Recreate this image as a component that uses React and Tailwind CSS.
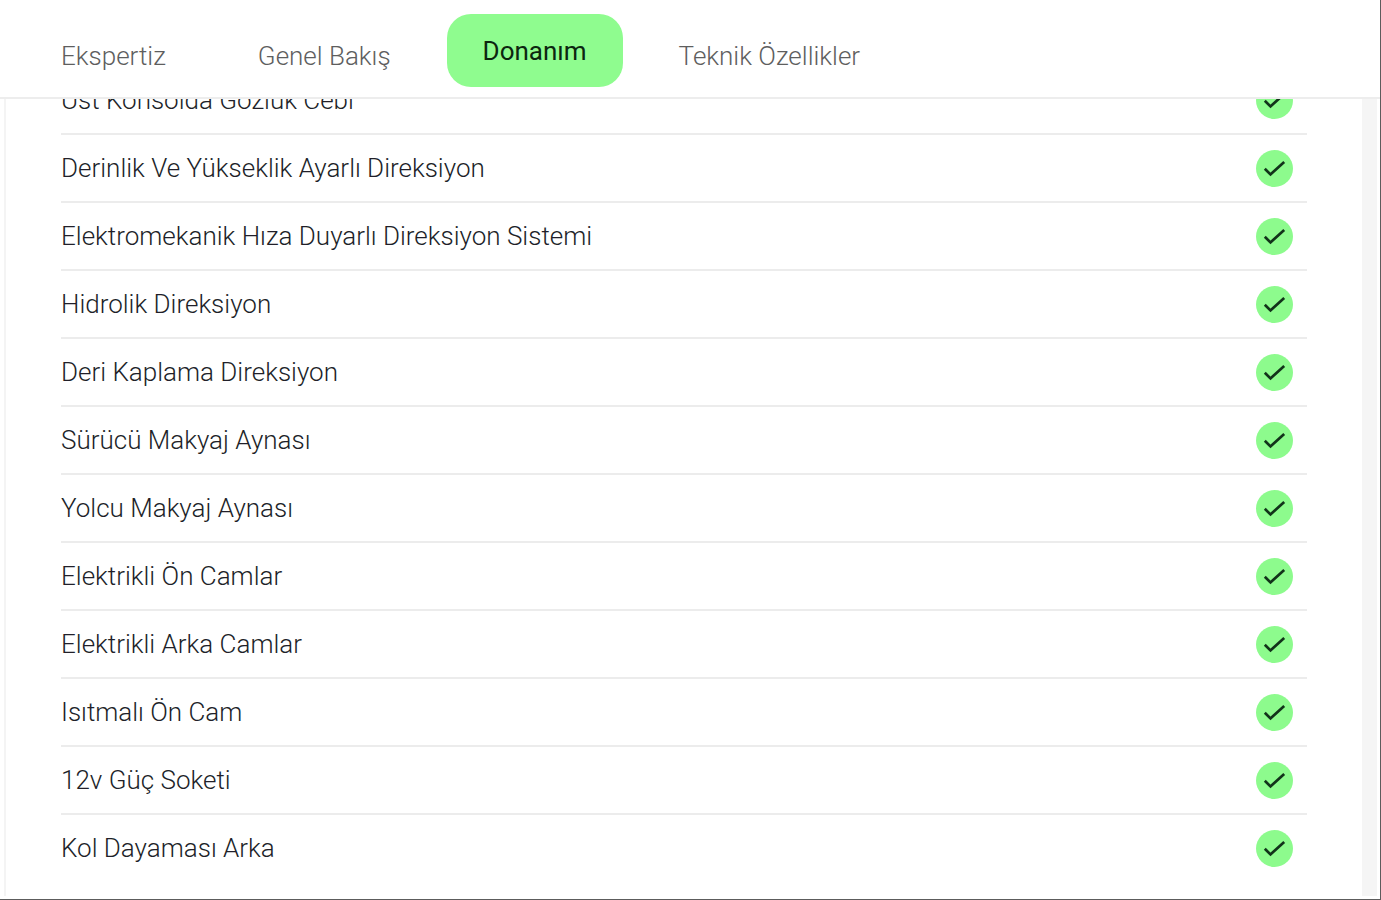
import React, { useState } from 'react'

const tabs = ['Ekspertiz', 'Genel Bakış', 'Donanım', 'Teknik Özellikler']

const features = [
  'Üst Konsolda Gözlük Cebi',
  'Derinlik Ve Yükseklik Ayarlı Direksiyon',
  'Elektromekanik Hıza Duyarlı Direksiyon Sistemi',
  'Hidrolik Direksiyon',
  'Deri Kaplama Direksiyon',
  'Sürücü Makyaj Aynası',
  'Yolcu Makyaj Aynası',
  'Elektrikli Ön Camlar',
  'Elektrikli Arka Camlar',
  'Isıtmalı Ön Cam',
  '12v Güç Soketi',
  'Kol Dayaması Arka',
]

const CheckBadge = () => (
  <svg className="w-[37px] h-[37px] shrink-0" viewBox="0 0 37 37" role="img" aria-label="Var">
    <circle cx="18.5" cy="18.5" r="18.5" fill="#8dfb8d" />
    <path d="M8.8 18.8l5.7 5.6L28.2 12" fill="none" stroke="#12331a" strokeWidth="2.7" />
  </svg>
)

const App = () => {
  const [active, setActive] = useState('Donanım')

  return (
    <div className="h-screen flex flex-col overflow-hidden bg-white border-r border-b border-[#5c5c5c] font-['Roboto',sans-serif] text-[26px] leading-8 font-light">
      {/*--- Tabs ---*/}
      <header className="relative z-10 shrink-0 bg-white border-b-2 border-[#ededed] pt-[14px] pb-[10px] pl-[25px]">
        <nav className="flex gap-5">
          {tabs.map((tab) => (
            <button
              key={tab}
              type="button"
              onClick={() => setActive(tab)}
              className={
                tab === active
                  ? 'h-[73px] px-9 rounded-3xl bg-[#8ffc8f] text-[#0c260f] font-normal whitespace-nowrap cursor-pointer'
                  : 'h-[73px] px-9 pt-[10px] text-[#5e5e5e] whitespace-nowrap cursor-pointer'
              }
            >
              {tab}
            </button>
          ))}
        </nav>
      </header>

      {/*--- Equipment list ---*/}
      <main className="flex-1 min-h-0 flex pl-1 pr-[3px] pb-[3px]">
        <section className="flex-1 border-l-2 border-r-[15px] border-l-[#f4f4f4] border-r-[#f5f5f5] pl-[55px] pr-[55px]">
          <ul className="-mt-8">
            {features.map((feature) => (
              <li
                key={feature}
                className="h-[68px] flex items-center justify-between pr-[14px] border-b-2 border-[#ececec] last:border-transparent text-[#211f29]"
              >
                <span>{feature}</span>
                <CheckBadge />
              </li>
            ))}
          </ul>
        </section>
      </main>
    </div>
  )
}

export default App
